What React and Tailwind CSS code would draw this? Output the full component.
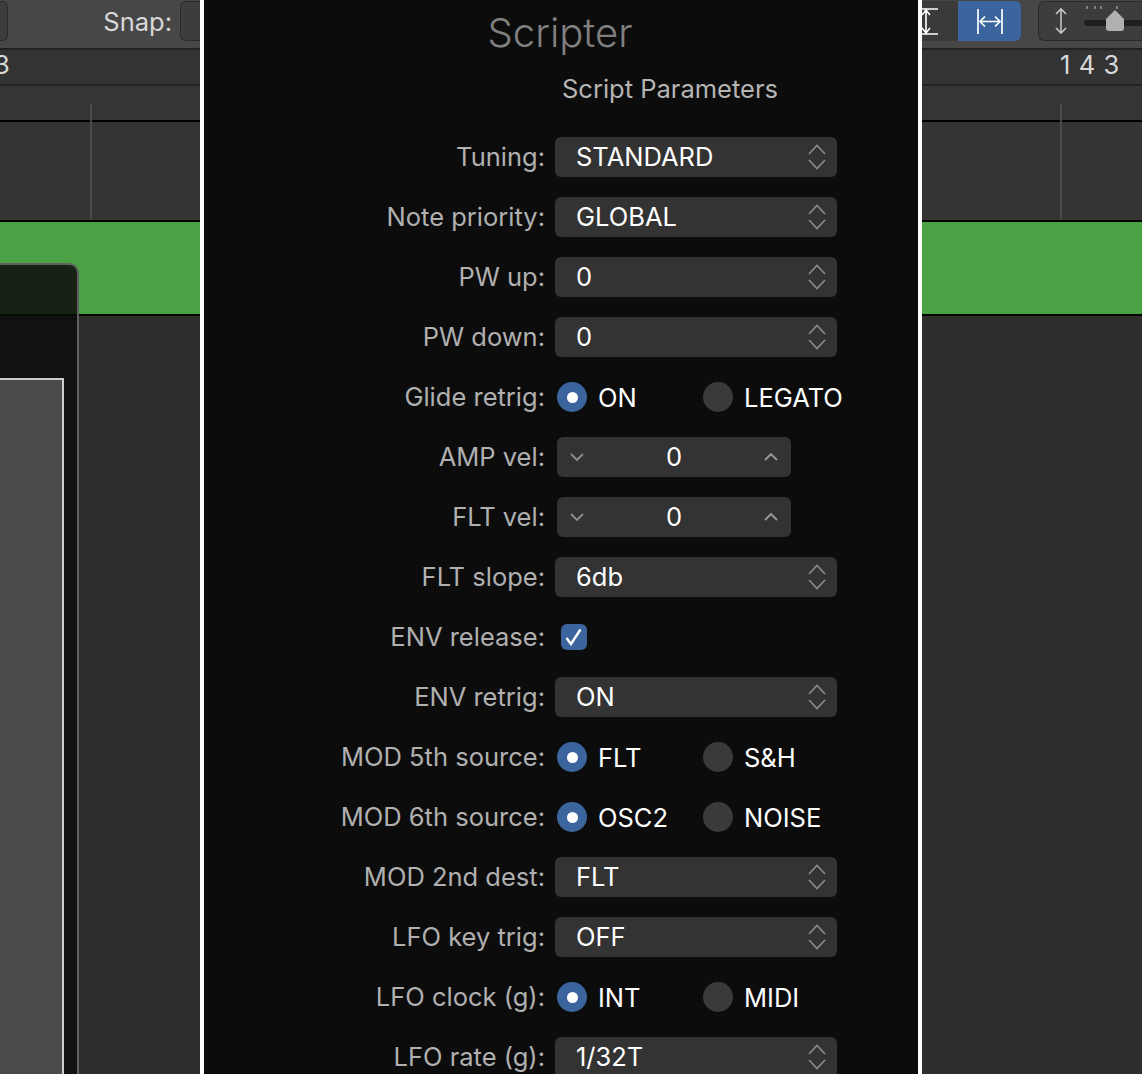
import React from 'react';

const rows = [
  { label: 'Tuning:', type: 'select', value: 'STANDARD' },
  { label: 'Note priority:', type: 'select', value: 'GLOBAL' },
  { label: 'PW up:', type: 'select', value: '0' },
  { label: 'PW down:', type: 'select', value: '0' },
  { label: 'Glide retrig:', type: 'radio', a: 'ON', b: 'LEGATO' },
  { label: 'AMP vel:', type: 'stepper', value: '0' },
  { label: 'FLT vel:', type: 'stepper', value: '0' },
  { label: 'FLT slope:', type: 'select', value: '6db' },
  { label: 'ENV release:', type: 'check' },
  { label: 'ENV retrig:', type: 'select', value: 'ON' },
  { label: 'MOD 5th source:', type: 'radio', a: 'FLT', b: 'S&H' },
  { label: 'MOD 6th source:', type: 'radio', a: 'OSC2', b: 'NOISE' },
  { label: 'MOD 2nd dest:', type: 'select', value: 'FLT' },
  { label: 'LFO key trig:', type: 'select', value: 'OFF' },
  { label: 'LFO clock (g):', type: 'radio', a: 'INT', b: 'MIDI' },
  { label: 'LFO rate (g):', type: 'select', value: '1/32T' },
];

function UpDown() {
  return (
    <svg width="18" height="30" viewBox="0 0 18 30" fill="none" stroke="#8c8c8c" strokeWidth="1.6" className="shrink-0">
      <path d="M1 12 L9 3.5 L17 12" />
      <path d="M1 18 L9 26.5 L17 18" />
    </svg>
  );
}

function Select({ value }) {
  return (
    <div className="flex h-10 w-[282px] items-center justify-between rounded-md bg-[#333333] pl-[21px] pr-[11px] text-[25.5px] leading-[38px] text-white">
      <span>{value}</span>
      <UpDown />
    </div>
  );
}

function Stepper({ value }) {
  return (
    <div className="ml-0.5 flex h-10 w-[234px] items-center justify-between rounded-md bg-[#333333] px-3 text-[25.5px] leading-[38px] text-white">
      <svg width="16" height="10" viewBox="0 0 16 10" fill="none" stroke="#8f8f8f" strokeWidth="1.8"><path d="M2 2 L8 8 L14 2" /></svg>
      <span>{value}</span>
      <svg width="16" height="10" viewBox="0 0 16 10" fill="none" stroke="#9a9a9a" strokeWidth="1.8"><path d="M2 8 L8 2 L14 8" /></svg>
    </div>
  );
}

function Radio({ a, b }) {
  return (
    <div className="ml-0.5 flex h-10 items-center text-[25.5px] leading-[38px] text-white">
      <div className="flex w-[146px] items-center gap-[11px]">
        <span className="flex h-[30px] w-[30px] items-center justify-center rounded-full bg-[#3c659e]">
          <span className="h-[11px] w-[11px] rounded-full bg-white" />
        </span>
        <span className="pt-0.5">{a}</span>
      </div>
      <div className="flex items-center gap-[11px]">
        <span className="h-[30px] w-[30px] rounded-full bg-[#3a3a3a]" />
        <span className="pt-0.5">{b}</span>
      </div>
    </div>
  );
}

function Check() {
  return (
    <div className="ml-1.5 flex h-10 items-center">
      <span className="flex h-[26px] w-[26px] items-center justify-center rounded-md bg-[#3c659e]">
        <svg width="18" height="18" viewBox="0 0 18 18" fill="none" stroke="#fff" strokeWidth="2.4"><path d="M1.5 10 L6 16 L15.5 1.5" /></svg>
      </span>
    </div>
  );
}

function Row({ row }) {
  return (
    <div className="flex h-10 items-center gap-2.5">
      <div className="w-[341px] text-right text-[25.5px] leading-[38px] text-[#b0b0b0]">{row.label}</div>
      {row.type === 'select' && <Select value={row.value} />}
      {row.type === 'stepper' && <Stepper value={row.value} />}
      {row.type === 'radio' && <Radio a={row.a} b={row.b} />}
      {row.type === 'check' && <Check />}
    </div>
  );
}

function Tracks({ children, right }) {
  return (
    <div className={`relative flex h-full flex-col overflow-hidden ${right ? 'w-[220px]' : 'w-[200px]'}`}>
      <div className="h-12 shrink-0 bg-[#474747]">{children}</div>
      <div className="h-0.5 shrink-0 bg-[#222222]" />
      <div className="h-[34px] shrink-0 bg-[#333333]" />
      <div className="h-0.5 shrink-0 bg-[#242424]" />
      <div className="h-[34px] shrink-0 bg-[#353535]" />
      <div className="h-0.5 shrink-0 bg-black" />
      <div className="h-[98px] shrink-0 bg-[#343434]" />
      <div className="h-0.5 shrink-0 bg-black" />
      <div className="h-[92px] shrink-0 bg-[#4ca145]" />
      <div className="h-0.5 shrink-0 bg-black" />
      <div className="flex-1 bg-[#2e2e2e]" />
    </div>
  );
}

export default function App() {
  return (
    <div className="flex h-[1074px] w-[1142px] overflow-hidden bg-white font-['Inter',sans-serif]">
      <Tracks>
        <div className="flex h-12 items-start justify-between pt-px">
          <span className="h-10 w-2 rounded-r-md border border-l-0 border-[#2a2a2a] bg-[#3d3d3d]" />
          <div className="flex items-start gap-2">
            <span className="text-[25.5px] leading-[42px] text-[#d8d8d8]">Snap:</span>
            <span className="h-10 w-5 rounded-l-md border border-r-0 border-[#2a2a2a] bg-[#3d3d3d]" />
          </div>
        </div>
        <span className="absolute top-12 left-[-6px] text-[25.5px] leading-[34px] text-[#d8d8d8]">3</span>
        <span className="absolute top-[104px] left-[90px] h-[116px] w-0.5 bg-[#4a4a4a]" />
        <div className="absolute top-[263px] left-[-12px] h-[830px] w-[91px] rounded-tr-[10px] border-2 border-[#5f5f5f] bg-[#0c0c0c]/[.85]">
          <div className="absolute top-[113px] left-0 h-[720px] w-[74px] border-2 border-[#cccccc] bg-[#4a4a4a]" />
        </div>
      </Tracks>
      <div className="ml-1 h-full w-[714px] bg-[#0c0c0c]">
        <div className="pt-2.5 pr-0.5 text-center text-[40px] leading-[46px] font-light text-[#808080]">Scripter</div>
        <div className="mt-4 ml-[358px] text-[25.5px] leading-[34px] text-[#b5b5b5]">Script Parameters</div>
        <div className="mt-[31px] flex flex-col gap-5">
          {rows.map(r => <Row key={r.label} row={r} />)}
        </div>
      </div>
      <div className="ml-1">
        <Tracks right>
          <div className="flex h-12 items-start pt-px">
            <span className="flex h-10 w-9 items-center overflow-hidden bg-[#3a3a3a]">
              <svg width="16" height="30" viewBox="0 0 16 30" fill="none" stroke="#fff" strokeWidth="1.6" className="shrink-0">
                <path d="M0 3 H16 M0 28 H16 M4 4 V27 M0 9 L4 4 L8 9 M0 22 L4 27 L8 22" />
              </svg>
            </span>
            <span className="flex h-10 w-[63px] items-center justify-center rounded-r-md bg-[#3c659e]">
              <svg width="30" height="30" viewBox="0 0 30 30" fill="none" stroke="#fff" strokeWidth="1.7">
                <path d="M3 3 V28 M27 3 V28 M5 15.5 H25 M10 10.5 L5 15.5 L10 20.5 M20 10.5 L25 15.5 L20 20.5" />
              </svg>
            </span>
            <span className="ml-[17px] flex h-10 flex-1 items-center gap-4 overflow-hidden rounded-l-md border border-r-0 border-[#2a2a2a] bg-[#3d3d3d] pl-[15px]">
              <svg width="14" height="28" viewBox="0 0 14 28" fill="none" stroke="#c4c4c4" strokeWidth="1.6" className="shrink-0">
                <path d="M7 2 V26 M2 7 L7 2 L12 7 M2 21 L7 26 L12 21" />
              </svg>
              <svg width="60" height="38" viewBox="0 0 60 38" className="shrink-0">
                <path d="M3 4 V7 M11 4 V7 M17 4 V7 M33 4 V7" stroke="#9a9a9a" strokeWidth="1.5" />
                <rect x="0" y="18" width="60" height="6" rx="3" fill="#1f1f1f" />
                <path d="M31 8 L40 17 V26 Q40 29 37 29 H25 Q22 29 22 26 V17 Z" fill="#b0b0b0" />
              </svg>
            </span>
          </div>
          <span className="absolute top-12 left-[138px] text-[25.5px] leading-[34px] tracking-[0.6px] text-[#d8d8d8]">1 4 3</span>
          <span className="absolute top-[104px] left-[138px] h-[116px] w-0.5 bg-[#4a4a4a]" />
        </Tracks>
      </div>
    </div>
  );
}
